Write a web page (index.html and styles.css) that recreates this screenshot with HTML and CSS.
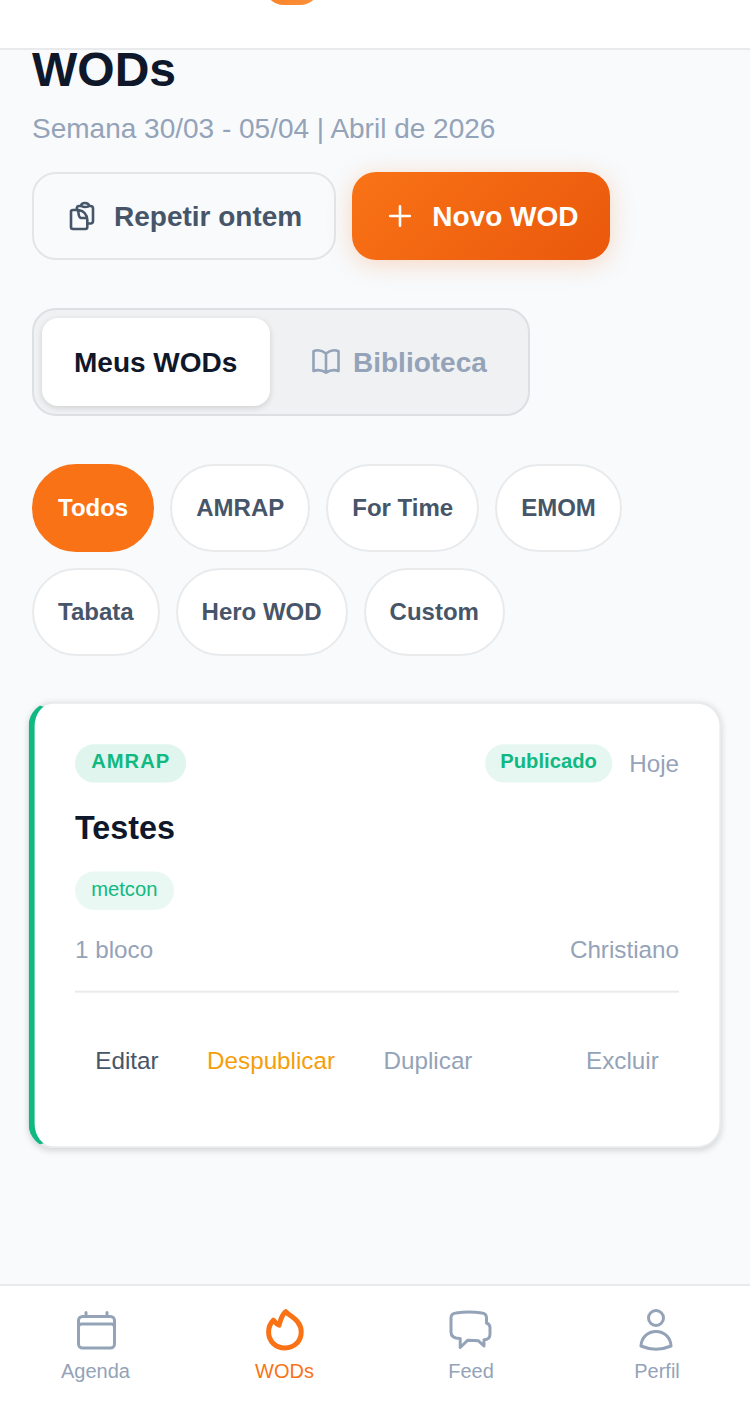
FILE: index.html
```html
<!DOCTYPE html>
<html lang="pt-BR">
<head>
<meta charset="utf-8">
<title>WODs</title>
<link rel="stylesheet" href="styles.css">
</head>
<body>
<div class="app">
  <header class="topbar"><div class="logo"></div></header>
  <main class="content">
    <h1 class="title">WODs</h1>
    <p class="subtitle">Semana 30/03 - 05/04 | Abril de 2026</p>
    <div class="actions">
      <button class="btn btn-outline">
        <svg class="icon" viewBox="0 0 32 32"><path d="M14 6H13Q10.8 6 10.8 8.5V10M24 6H24.5Q27 6 27 8.5V21Q27 23.5 24.5 23.5H22M15.2 5.6Q15.5 3 19 3Q22.5 3 23 5.6Q22.5 7 19 7Q15.5 7 15.2 5.6ZM5 11.5Q5 10 7 10H12.5C18 11 21 15 21.3 20V27Q21.3 29 19.3 29H7Q5 29 5 27ZM11.5 10C13.5 12 11.5 17.5 15 18H20.5"/></svg>
        <span class="label">Repetir ontem</span>
      </button>
      <button class="btn btn-primary">
        <svg class="icon" viewBox="0 0 32 32"><path d="M16 6.2V25.8M6.2 16H25.8"/></svg>
        <span class="label">Novo WOD</span>
      </button>
    </div>
    <div class="tabs">
      <button class="tab tab-active"><span class="label">Meus WODs</span></button>
      <button class="tab">
        <svg class="icon" viewBox="0 0 32 32"><path d="M16 7.5Q10 2.5 3.5 5.2V25Q10 22.6 16 26.6Q22 22.6 28.5 25V5.2Q22 2.5 16 7.5ZM16 7.5V26.6"/></svg>
        <span class="label">Biblioteca</span>
      </button>
    </div>
    <div class="chips">
      <button class="chip chip-active">Todos</button>
      <button class="chip">AMRAP</button>
      <button class="chip">For Time</button>
      <button class="chip">EMOM</button>
      <button class="chip">Tabata</button>
      <button class="chip">Hero WOD</button>
      <button class="chip">Custom</button>
    </div>
    <article class="card">
      <div class="card-head">
        <span class="badge badge-type">AMRAP</span>
        <span class="badge badge-status">Publicado</span>
        <span class="date">Hoje</span>
      </div>
      <h2 class="card-title">Testes</h2>
      <div class="tags"><span class="badge badge-tag">metcon</span></div>
      <div class="meta"><span>1 bloco</span><span>Christiano</span></div>
      <div class="card-actions">
        <button class="link link-dark">Editar</button>
        <button class="link link-warn">Despublicar</button>
        <button class="link">Duplicar</button>
        <button class="link link-end">Excluir</button>
      </div>
    </article>
  </main>
  <nav class="nav">
    <a class="nav-item">
      <svg class="nav-icon" viewBox="0 0 48 48"><rect x="6.5" y="10.5" width="36" height="31.5" rx="4"/><path d="M6.5 21Q6.5 18 9.5 18H39.5Q42.5 18 42.5 21M14 10V6.5M35 10V6.5"/></svg>
      Agenda
    </a>
    <a class="nav-item nav-active">
      <svg class="nav-icon" viewBox="0 0 48 48"><path d="M24.7 5.6C29 10.5 40.2 14 40.2 26C40.2 35.5 33 42 24 42C15 42 7.6 35.5 7.6 26C7.6 21 9.5 17 12.3 14.2C14 15.5 15.5 18.5 18 19.2C19.5 14 20.5 9 24.7 5.6Z"/></svg>
      WODs
    </a>
    <a class="nav-item">
      <svg class="nav-icon" viewBox="0 0 48 48"><path d="M9 7Q22 5 35 7Q39.5 7.5 39.5 12V17Q43 18.5 43 21.5V28Q43 33.8 37 33.8V40L31.5 34.8L20.8 34.2L13.2 41.5V32.5Q4 32.5 4 26V12Q4 7.5 9 7Z"/></svg>
      Feed
    </a>
    <a class="nav-item">
      <svg class="nav-icon" viewBox="0 0 48 48"><circle cx="23" cy="12" r="7.5"/><path d="M7.9 40C8.5 31 15 25.4 23 25.4S37.5 31 38.1 40Q23 46.4 7.9 40Z"/></svg>
      Perfil
    </a>
  </nav>
</div>
</body>
</html>
```
FILE: styles.css
```css
* { box-sizing: border-box; }
body {
  margin: 0;
  background: #f8fafc;
  color: #0f172a;
  font-family: "Liberation Sans", Arial, sans-serif;
}
button { font-family: inherit; margin: 0; background: none; border: 0; white-space: nowrap; }
h1, h2, p { margin: 0; }
.app { display: flex; flex-direction: column; height: 1412px; overflow: hidden; }
.topbar {
  flex: none;
  height: 50px;
  padding-left: 264px;
  background: #fff;
  border-bottom: 2px solid #e8eaec;
}
.logo {
  width: 56px;
  height: 56px;
  margin-top: -51px;
  border-radius: 20px;
  background: linear-gradient(135deg, #f97316, #fb923c);
}
.content { flex: 1; padding: 0 32px; }
.title { margin-top: -8px; height: 56px; line-height: 56px; font-size: 48px; font-weight: 700; }
.subtitle { margin-top: 15px; height: 32px; line-height: 32px; font-size: 28px; color: #94a3b8; }
.actions { display: flex; gap: 16px; margin-top: 27px; }
.btn {
  display: flex;
  align-items: center;
  gap: 16px;
  height: 88px;
  padding: 0 32px;
  border-radius: 24px;
  font-size: 28px;
  font-weight: 700;
}
.label { padding-top: 2px; }
.btn-outline { border: 2px solid #e4e5e7; color: #475569; }
.btn-primary {
  color: #fff;
  background: linear-gradient(135deg, #f97316, #ea580c);
  box-shadow: 0 4px 24px rgba(249, 115, 22, .25);
}
.icon {
  flex: none;
  width: 32px;
  height: 32px;
  fill: none;
  stroke: currentColor;
  stroke-width: 2.6;
  stroke-linecap: round;
  stroke-linejoin: round;
}
.tabs {
  display: flex;
  gap: 8px;
  width: 498px;
  margin-top: 48px;
  padding: 8px;
  background: #eff1f3;
  border: 2px solid #dddfe2;
  border-radius: 24px;
}
.tab {
  display: flex;
  align-items: center;
  gap: 11px;
  height: 88px;
  padding: 0 32px;
  border-radius: 16px;
  font-size: 28px;
  font-weight: 700;
  color: #94a3b8;
}
.tab-active {
  width: 228px;
  color: #0f172a;
  background: #fff;
  box-shadow: 0 2px 6px rgba(0, 0, 0, .14);
}
.chips { display: flex; flex-wrap: wrap; gap: 16px; margin-top: 48px; }
.chip {
  height: 88px;
  padding: 0 24px;
  border: 2px solid #e8eaec;
  border-radius: 44px;
  background: #fff;
  color: #475569;
  font-size: 24px;
  font-weight: 700;
}
.chip-active { color: #fff; background: #f97316; border-color: #f97316; }
.card {
  display: flex;
  flex-direction: column;
  height: 442px;
  margin-top: 48px;
  padding: 40px;
  background: #fff;
  border: 2px solid #e8eaec;
  border-left: 6px solid #10b981;
  border-radius: 24px;
  box-shadow: 0 2px 6px rgba(0, 0, 0, .14);
  transform: scale(1.01);
}
.card-head { display: flex; gap: 16px; height: 38px; align-items: center; }
.badge {
  display: inline-block;
  height: 38px;
  padding: 0 16px;
  border-radius: 19px;
  font-size: 20px;
  line-height: 35px;
  color: #10b981;
}
.badge-type { font-weight: 700; letter-spacing: 1px; background: #e0f5ed; }
.badge-status { margin-left: auto; margin-right: 1px; padding: 0 15px; font-weight: 700; background: #e6f7f1; }
.badge-tag { background: #e9f8f3; }
.date { padding-top: 2px; font-size: 24px; color: #94a3b8; }
.card-title { height: 40px; margin-top: 25px; line-height: 40px; font-size: 32px; }
.tags { display: flex; margin-top: 23px; }
.meta {
  display: flex;
  justify-content: space-between;
  height: 28px;
  margin-top: 26px;
  line-height: 28px;
  font-size: 24px;
  color: #94a3b8;
}
.card-actions {
  display: flex;
  gap: 8px;
  margin-top: 26px;
  padding-top: 24px;
  border-top: 2px solid #e8eaec;
}
.link { height: 88px; padding: 0 20px; font-size: 24px; color: #94a3b8; }
.link-dark { color: #475569; }
.link-warn { color: #f59e0b; }
.link-end { margin-left: auto; }
.nav {
  flex: none;
  display: grid;
  grid-template-columns: 191px 187px 186px 186px;
  height: 128px;
  padding-top: 20px;
  background: #fff;
  border-top: 2px solid #e8eaec;
}
.nav-item {
  display: flex;
  flex-direction: column;
  align-items: center;
  gap: 5px;
  font-size: 20px;
  line-height: 24px;
  color: #94a3b8;
}
.nav-active { color: #f97316; }
.nav-icon {
  width: 48px;
  height: 48px;
  fill: none;
  stroke: currentColor;
  stroke-width: 3;
  stroke-linecap: round;
  stroke-linejoin: round;
}
.nav-active .nav-icon { stroke-width: 5; }
```
